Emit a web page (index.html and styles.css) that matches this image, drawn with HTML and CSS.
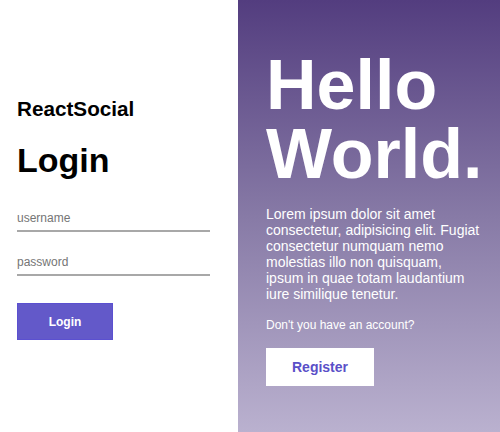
FILE: index.html
```html
<!DOCTYPE html>
<html>
<head>
<meta charset="utf-8">
<link rel="stylesheet" href="styles.css">
</head>
<body>
<div class="page">
  <div class="left">
    <div class="brand">ReactSocial</div>
    <h1 class="title">Login</h1>
    <form class="form">
      <input class="field" type="text" placeholder="username">
      <input class="field" type="password" placeholder="password">
      <button class="login-btn" type="button">Login</button>
    </form>
  </div>
  <div class="right">
    <h2 class="hello">Hello World.</h2>
    <p class="lorem">Lorem ipsum dolor sit amet consectetur, adipisicing elit. Fugiat consectetur numquam nemo molestias illo non quisquam, ipsum in quae totam laudantium iure similique tenetur.</p>
    <div class="ask">Don't you have an account?</div>
    <button class="register-btn" type="button">Register</button>
  </div>
</div>
</body>
</html>
```
FILE: styles.css
```css
* { box-sizing: border-box; }
html, body { margin: 0; padding: 0; }
body {
  font-family: "Liberation Sans", Arial, sans-serif;
  background: #fff;
}
.page {
  display: flex;
  width: 500px;
  height: 432px;
  overflow: hidden;
}
.left {
  width: 238px;
  flex: none;
  padding: 97px 0 0 17px;
  display: flex;
  flex-direction: column;
}
.brand {
  font-size: 20.7px;
  line-height: 23px;
  font-weight: bold;
  color: #000;
}
.title {
  margin: 21px 0 0;
  font-size: 34px;
  line-height: 39px;
  font-weight: bold;
  color: #000;
}
.form {
  margin-top: 26px;
  display: flex;
  flex-direction: column;
  align-items: flex-start;
}
.field {
  width: 193px;
  border: none;
  border-bottom: 2px solid #a8a8a8;
  padding: 5px 0;
  font-family: "Liberation Sans", Arial, sans-serif;
  font-size: 12px;
  line-height: 14px;
  outline: none;
  margin-bottom: 18px;
}
.field::placeholder { color: #757575; }
.login-btn {
  margin-top: 9px;
  width: 96px;
  height: 37px;
  border: 1px solid #5b50d0;
  background: #6359c9;
  color: #fff;
  font-family: "Liberation Sans", Arial, sans-serif;
  font-size: 12px;
  font-weight: bold;
  cursor: pointer;
}
.right {
  flex: 1;
  padding: 51px 20px 0 28px;
  color: #fff;
  background: linear-gradient(to bottom, #533d7f 0%, #877aa6 50%, #bab1cf 100%);
}
.hello {
  margin: 0;
  font-size: 70px;
  line-height: 69px;
  font-weight: bold;
}
.lorem {
  margin: 17px 0 0;
  font-size: 14px;
  line-height: 16px;
}
.ask {
  margin-top: 16px;
  font-size: 12px;
  line-height: 14px;
}
.register-btn {
  margin-top: 16px;
  width: 108px;
  height: 38px;
  border: none;
  background: #fff;
  color: #5a4fc8;
  font-family: "Liberation Sans", Arial, sans-serif;
  font-size: 14px;
  font-weight: bold;
  cursor: pointer;
}
```
